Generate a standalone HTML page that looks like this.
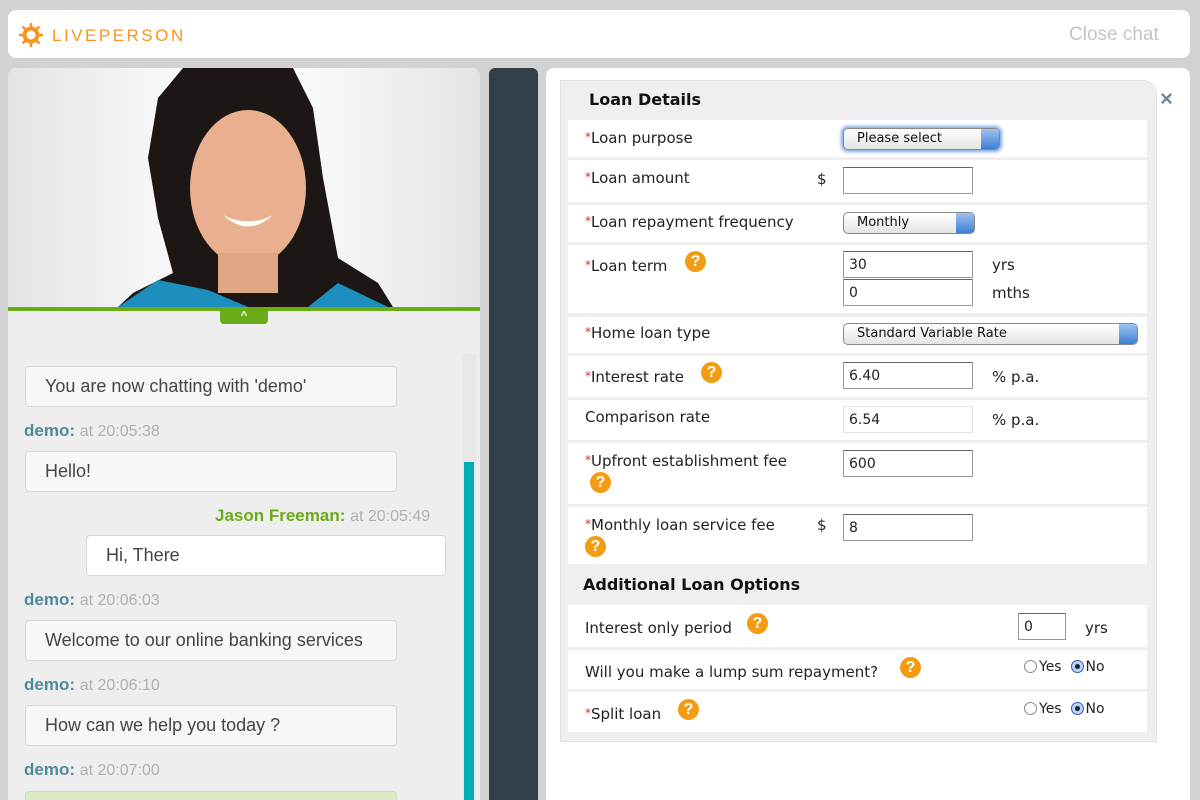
<!DOCTYPE html>
<html><head><style>
*{margin:0;padding:0;box-sizing:border-box}
html,body{width:1200px;height:800px;overflow:hidden}
body{background:#d2d2d2;font-family:"Liberation Sans",sans-serif;position:relative}
.a{position:absolute}
.f{font-family:"DejaVu Sans","Liberation Sans",sans-serif;font-size:15px;color:#222}
.row{position:absolute;left:568px;width:579px;background:#fff}
.star{color:#e0282e;font-size:12px;vertical-align:2px}
.q{position:absolute;width:21px;height:21px;border-radius:50%;background:#f39c12;color:#fff;font:bold 16px "Liberation Sans",sans-serif;text-align:center;line-height:21px}
.inp{position:absolute;height:27px;border:1px solid #999;border-top-color:#666;background:#fff;padding:0 5px;line-height:26px;font-family:"DejaVu Sans",sans-serif;font-size:14px;color:#222}
.sel{position:absolute;height:22px;border:1px solid #888;border-radius:5px;background:linear-gradient(#fff,#e4e4e4);font-family:"DejaVu Sans",sans-serif;font-size:13px;line-height:20px;padding:0 13px;color:#111}
.sel:after{content:"";position:absolute;right:0;top:0;width:18px;height:20px;border-radius:0 4px 4px 0;background:linear-gradient(#9ec3f0,#3d7ed6)}
.bub{position:absolute;background:#f7f7f7;border:1px solid #d8d8d8;border-radius:4px;font-size:18px;color:#444;padding:9px 19px}
.nm{position:absolute;left:24px;font-size:17px;font-weight:bold;color:#4d8a9a}
.nm span{font-weight:normal;color:#b0b0b0;font-size:16px}
.rad{display:inline-block;width:13px;height:13px;border:1px solid #888;border-radius:50%;vertical-align:-2px;margin-right:2px;background:#fff}
.rad.on{border-color:#2a5fb0;background:radial-gradient(#123 2px,#bcd6f5 3px)}
</style></head><body>
<div class="a" style="left:8px;top:10px;width:1182px;height:48px;background:#fff;border-radius:8px"></div>
<svg class="a" style="left:19px;top:23px" width="24" height="24" viewBox="0 0 24 24"><g stroke="#f7941d" stroke-width="2.5"><line x1="12" y1="0" x2="12" y2="24"/><line x1="0" y1="12" x2="24" y2="12"/><line x1="3.5" y1="3.5" x2="20.5" y2="20.5"/><line x1="20.5" y1="3.5" x2="3.5" y2="20.5"/></g><circle cx="12" cy="12" r="8.5" fill="#f7941d"/><circle cx="12" cy="12" r="4.5" fill="#fff"/></svg>
<div class="a" style="left:52px;top:26px;font-size:17px;letter-spacing:2.5px;color:#f7941d">LIVEPERSON</div>
<div class="a" style="left:1069px;top:24px;font-size:19px;color:#c4c4c4">Close chat</div>
<div class="a" style="left:8px;top:68px;width:472px;height:732px;background:#efeeee;border-radius:8px 8px 0 0;overflow:hidden">
 <div class="a" style="left:0;top:0;width:472px;height:239px;background:linear-gradient(90deg,#e4e4e4,#fbfbfb 40%,#fbfbfb 60%,#e4e4e4)"></div>
 <svg class="a" style="left:0;top:0" width="472" height="239">
  <path d="M110 239 L125 225 L165 205 L150 150 L140 90 L150 30 L175 0 L285 0 L305 40 L315 110 L330 190 L370 215 L385 239Z" fill="#1c1714"/>
  <ellipse cx="240" cy="120" rx="58" ry="78" fill="#e8b08e"/>
  <path d="M180 80 Q200 30 250 25 Q300 35 300 100 L300 60 Q280 10 240 12 Q190 20 180 80Z" fill="#1c1714"/>
  <rect x="210" y="185" width="60" height="40" fill="#e0a784"/>
  <path d="M110 239 L150 212 L200 222 L240 239Z M300 239 L330 215 L380 239Z" fill="#1c8fbf"/>
  <path d="M215 147 Q240 160 265 147 Q240 170 215 147Z" fill="#fff"/>
 </svg>
 <div class="a" style="left:0;top:239px;width:472px;height:4px;background:#6aab18"></div>
 <div class="a" style="left:212px;top:242px;width:48px;height:14px;background:#6aab18;border-radius:0 0 4px 4px;color:#fff;font-size:11px;text-align:center;line-height:12px;font-weight:bold">^</div>
 <div class="a" style="left:454px;top:286px;width:14px;height:460px;background:#e8e8e8"></div>
 <div class="a" style="left:456px;top:394px;width:10px;height:350px;background:#00adb5"></div>
</div>
<div class="bub" style="left:25px;top:366px;width:372px">You are now chatting with 'demo'</div>
<div class="nm" style="top:421px">demo: <span>at 20:05:38</span></div>
<div class="bub" style="left:25px;top:451px;width:372px">Hello!</div>
<div class="nm" style="left:215px;top:506px;color:#6aab18">Jason Freeman: <span>at 20:05:49</span></div>
<div class="bub" style="left:86px;top:535px;width:360px;background:#fff">Hi, There</div>
<div class="nm" style="top:590px">demo: <span>at 20:06:03</span></div>
<div class="bub" style="left:25px;top:620px;width:372px">Welcome to our online banking services</div>
<div class="nm" style="top:675px">demo: <span>at 20:06:10</span></div>
<div class="bub" style="left:25px;top:705px;width:372px">How can we help you today ?</div>
<div class="nm" style="top:760px">demo: <span>at 20:07:00</span></div>
<div class="a" style="left:25px;top:791px;width:372px;height:20px;background:#dcebc3;border:1px solid #d0dcb8;border-radius:4px"></div>
<div class="a" style="left:489px;top:68px;width:49px;height:732px;background:#333f48;border-radius:6px 6px 0 0"></div>
<div class="a" style="left:546px;top:68px;width:644px;height:732px;background:#fff;border-radius:8px 8px 0 0"></div>
<div class="a" style="left:1160px;top:86px;font-size:22px;font-weight:bold;color:#6b8899">×</div>
<div class="a" style="left:560px;top:80px;width:597px;height:662px;background:#efefef;border-radius:0 14px 0 0;border:1px solid #e2e2e2"></div>
<div class="a f" style="left:589px;top:90px;font-weight:bold;font-size:16px;color:#111">Loan Details</div>
<div class="row" style="top:120px;height:37px"></div>
<div class="row" style="top:160px;height:42px"></div>
<div class="row" style="top:205px;height:37px"></div>
<div class="row" style="top:245px;height:68px"></div>
<div class="row" style="top:317px;height:36px"></div>
<div class="row" style="top:356px;height:41px"></div>
<div class="row" style="top:400px;height:40px"></div>
<div class="row" style="top:443px;height:61px"></div>
<div class="row" style="top:507px;height:57px"></div>
<div class="a f" style="left:583px;top:575px;font-weight:bold;font-size:16px;color:#111">Additional Loan Options</div>
<div class="row" style="top:605px;height:42px"></div>
<div class="row" style="top:650px;height:39px"></div>
<div class="row" style="top:692px;height:40px"></div>

<div class="a f" style="left:585px;top:129px"><span class="star">*</span>Loan purpose</div>
<div class="sel" style="left:843px;top:128px;width:157px;box-shadow:0 0 3px 2px #7ea9e6">Please select</div>
<div class="a f" style="left:585px;top:169px"><span class="star">*</span>Loan amount</div>
<div class="a f" style="left:817px;top:170px">$</div>
<div class="inp" style="left:843px;top:167px;width:130px"></div>
<div class="a f" style="left:585px;top:213px"><span class="star">*</span>Loan repayment frequency</div>
<div class="sel" style="left:843px;top:212px;width:132px">Monthly</div>
<div class="a f" style="left:585px;top:257px"><span class="star">*</span>Loan term</div>
<div class="q" style="left:685px;top:251px">?</div>
<div class="inp" style="left:843px;top:251px;width:130px">30</div>
<div class="inp" style="left:843px;top:279px;width:130px">0</div>
<div class="a f" style="left:992px;top:256px">yrs</div>
<div class="a f" style="left:992px;top:284px">mths</div>
<div class="a f" style="left:585px;top:324px"><span class="star">*</span>Home loan type</div>
<div class="sel" style="left:843px;top:323px;width:295px">Standard Variable Rate</div>
<div class="a f" style="left:585px;top:368px"><span class="star">*</span>Interest rate</div>
<div class="q" style="left:701px;top:362px">?</div>
<div class="inp" style="left:843px;top:362px;width:130px">6.40</div>
<div class="a f" style="left:992px;top:368px">% p.a.</div>
<div class="a f" style="left:585px;top:408px">Comparison rate</div>
<div class="inp" style="left:843px;top:406px;width:130px;border-color:#e3e3e3">6.54</div>
<div class="a f" style="left:992px;top:411px">% p.a.</div>
<div class="a f" style="left:585px;top:452px"><span class="star">*</span>Upfront establishment fee</div>
<div class="q" style="left:590px;top:472px">?</div>
<div class="inp" style="left:843px;top:450px;width:130px">600</div>
<div class="a f" style="left:585px;top:516px"><span class="star">*</span>Monthly loan service fee</div>
<div class="a f" style="left:817px;top:516px">$</div>
<div class="q" style="left:585px;top:536px">?</div>
<div class="inp" style="left:843px;top:514px;width:130px">8</div>
<div class="a f" style="left:585px;top:619px">Interest only period</div>
<div class="q" style="left:747px;top:613px">?</div>
<div class="inp" style="left:1018px;top:613px;width:48px">0</div>
<div class="a f" style="left:1085px;top:619px">yrs</div>
<div class="a f" style="left:585px;top:663px">Will you make a lump sum repayment?</div>
<div class="q" style="left:900px;top:657px">?</div>
<div class="a f" style="left:1024px;top:659px;font-size:14px"><span class="rad"></span>Yes &nbsp;<span class="rad on"></span>No</div>
<div class="a f" style="left:585px;top:705px"><span class="star">*</span>Split loan</div>
<div class="q" style="left:678px;top:699px">?</div>
<div class="a f" style="left:1024px;top:701px;font-size:14px"><span class="rad"></span>Yes &nbsp;<span class="rad on"></span>No</div>
</body></html>
